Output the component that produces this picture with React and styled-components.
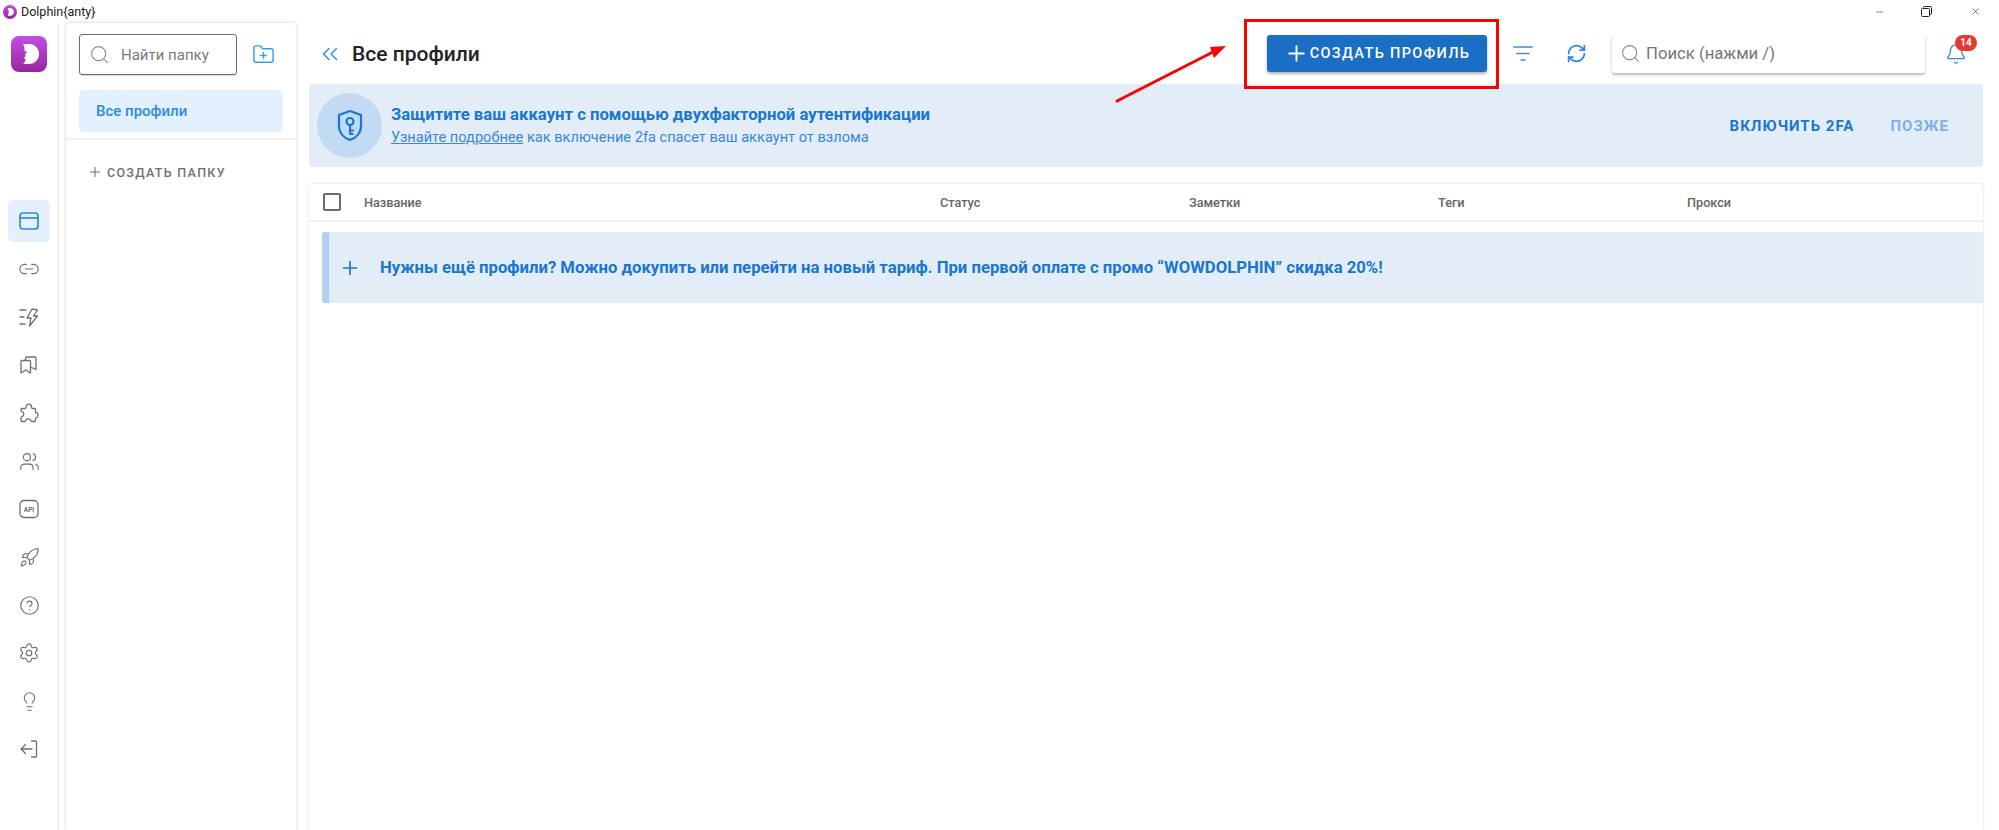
import React from 'react';
import styled, { createGlobalStyle } from 'styled-components';
import {
  Link2,
  Users,
  Rocket,
  CircleHelp,
  Settings,
  Lightbulb,
  Search,
  FolderPlus,
  ChevronsLeft,
  Plus,
  RefreshCw,
  Bell,
  Minus,
  X,
} from 'lucide-react';

const GlobalStyle = createGlobalStyle`
  html, body {
    margin: 0;
    padding: 0;
    background: #fff;
    font-family: Roboto, "Liberation Sans", sans-serif;
  }
  * { box-sizing: border-box; }
`;

const BLUE = '#1976d2';
const LIGHT = '#e3edf8';

const LogoMark = ({ size = 36, radius = 8 }) => (
  <svg width={size} height={size} viewBox="0 0 36 36">
    <defs>
      <linearGradient id={`lg${size}`} x1="0" y1="0" x2="0" y2="1">
        <stop offset="0" stopColor="#c04fe6" />
        <stop offset="1" stopColor="#98269f" />
      </linearGradient>
    </defs>
    <rect width="36" height="36" rx={radius} fill={`url(#lg${size})`} />
    <path
      d="M12 8h6c6 0 10 4.500 10 10s-4 10-10 10h-6c1.500-1.500 2.400-3 2.600-4.500l-1.600-1.500 1.400-1.500v-3l2-1-3-2c.5-2.500-.2-4.500-1.400-6.500z"
      fill="#fff"
    />
  </svg>
);

const BrowserIcon = () => (
  <svg width="20" height="18" viewBox="0 0 20 18" fill="none" stroke="currentColor" strokeWidth="1.700">
    <rect x="1" y="1" width="18" height="16" rx="3" />
    <path d="M1 6h18" />
  </svg>
);

const BoltList = () => (
  <svg width="21" height="21" viewBox="0 0 21 21" fill="none" stroke="currentColor" strokeWidth="1.300" strokeLinejoin="round" strokeLinecap="round">
    <path d="M1 3h6M1 10h4M1 17h5" />
    <path d="M13 2l-5 9h4l-1.500 8 8-10h-4l4-6z" />
  </svg>
);

const Bookmarks = () => (
  <svg width="20" height="20" viewBox="0 0 20 20" fill="none" stroke="currentColor" strokeWidth="1.300" strokeLinejoin="round">
    <path d="M2 6.500a1 1 0 0 1 1-1h7.500a1 1 0 0 1 1 1V18l-4.700-3L2 18z" />
    <path d="M6.500 5.500V3a1 1 0 0 1 1-1H16a1 1 0 0 1 1 1v11.500l-5.500-2.500" />
  </svg>
);

const PuzzleBlob = () => (
  <svg width="20" height="20" viewBox="0 0 20 20" fill="none" stroke="currentColor" strokeWidth="1.300" strokeLinejoin="round">
    <path d="M7 4.200c0-4 5.500-4 5.500 0 0 .8.500 1.300 1.300 1.300h1.700a1 1 0 0 1 1 1v2c0 .8.500 1.200 1 1.200 2 .4 2 4.600 0 5-.5 0-1 .4-1 1.200v1.600a1 1 0 0 1-1 1h-2.500c-.7 0-1-.4-1.200-1-.6-2.200-4.400-2.200-5 0-.2.6-.5 1-1.200 1H3a1 1 0 0 1-1-1v-2.800c0-.6.400-1 1-1.200 2.400-.6 2.400-4.200 0-4.800-.6-.2-1-.6-1-1.200V6.500a1 1 0 0 1 1-1h2.700c.8 0 1.300-.5 1.300-1.300z" />
  </svg>
);

const ApiBadge = () => (
  <svg width="20" height="20" viewBox="0 0 20 20" fill="none" stroke="currentColor" strokeWidth="1.300">
    <rect x="1" y="1.500" width="18" height="17" rx="4" />
    <text x="10" y="12.500" textAnchor="middle" fontSize="6.500" fontWeight="700" fontFamily="Roboto" fill="currentColor" stroke="none">API</text>
  </svg>
);

const ExitLeft = () => (
  <svg width="20" height="20" viewBox="0 0 20 20" fill="none" stroke="currentColor" strokeWidth="1.300" strokeLinecap="round" strokeLinejoin="round">
    <path d="M12.500 2h4a1 1 0 0 1 1 1v14a1 1 0 0 1-1 1h-4" />
    <path d="M13 10H2M6.500 5.500 2 10l4.500 4.500" />
  </svg>
);

const FilterLines = () => (
  <svg width="20" height="15" viewBox="0 0 20 15" fill="none" stroke="#3a8fe0" strokeWidth="1.500" strokeLinecap="round">
    <path d="M.8 1h18.400M4 7.500h12M8 14h4" />
  </svg>
);

const ShieldKey = () => (
  <svg width="26" height="33" viewBox="0 0 26 33" fill="none" stroke={BLUE} strokeWidth="2.200" strokeLinejoin="round" strokeLinecap="round">
    <path d="M13 2 24 6v11c0 7-5 12-11 14C7 29 2 24 2 17V6z" />
    <circle cx="13" cy="12.500" r="3.500" />
    <path d="M13 16v9M13 21.500h3M13 25h2.500" />
  </svg>
);

const RestoreIcon = () => (
  <svg width="11" height="11" viewBox="0 0 11 11" fill="none" stroke="#222" strokeWidth="1">
    <rect x=".5" y="2.500" width="8" height="8" rx="1" />
    <path d="M2.500 2.500V1.500a1 1 0 0 1 1-1h6a1 1 0 0 1 1 1v6a1 1 0 0 1-1 1h-1" />
  </svg>
);

const Page = styled.div`
  position: relative;
  width: 1999px;
  height: 830px;
  overflow: hidden;
  display: flex;
  flex-direction: column;
`;

const TitleBar = styled.header`
  height: 23px;
  flex: none;
  display: flex;
  align-items: center;
  padding: 0 18px 0 3px;
  font-size: 12.500px;
  color: #222;
`;

const AppName = styled.span`
  margin-left: 4px;
  flex: 1;
`;

const WinButton = styled.span`
  width: 11px;
  height: 11px;
  display: flex;
  align-items: center;
  justify-content: center;
  color: #222;
  margin-left: ${(p) => p.$gap}px;
`;

const Body = styled.div`
  flex: 1;
  display: flex;
  min-height: 0;
`;

const Rail = styled.nav`
  width: 59px;
  flex: none;
  border-right: 2px solid #efefef;
  display: flex;
  flex-direction: column;
  align-items: center;
  padding: 13px 0 0 1px;
`;

const Nav = styled.div`
  margin-top: 128px;
  display: flex;
  flex-direction: column;
  gap: 6px;
`;

const NavItem = styled.div`
  width: 42px;
  height: 42px;
  border-radius: 5px;
  display: flex;
  align-items: center;
  justify-content: center;
  background: ${(p) => (p.$active ? '#e3f0fd' : 'transparent')};
  color: ${(p) => (p.$active ? '#2f8ae6' : '#6f6f6f')};
`;

const Folders = styled.aside`
  width: 230px;
  flex: none;
  margin-left: 7px;
  border-radius: 4px 4px 0 0;
  box-shadow: 0 0 4px rgba(0, 0, 0, 0.18);
  background: #fff;
`;

const FolderTop = styled.div`
  padding: 11px 13px 6px;
  border-bottom: 2px solid #f1f1f1;
`;

const FolderSearchRow = styled.div`
  display: flex;
  align-items: center;
  gap: 15px;
  margin-bottom: 15px;
`;

const FolderSearch = styled.div`
  width: 158px;
  height: 41px;
  border: 1px solid #6c6c6c;
  border-radius: 3px;
  display: flex;
  align-items: center;
  padding-left: 9px;
  gap: 11px;
  font-size: 15px;
  color: #7a7a7a;
  box-shadow: 0 1px 1px rgba(0, 0, 0, 0.15);
`;

const FolderItem = styled.div`
  height: 42px;
  border-radius: 5px;
  background: #e3f0fd;
  color: #2b8be6;
  font-size: 15px;
  font-weight: 500;
  display: flex;
  align-items: center;
  padding-left: 17px;
`;

const CreateFolder = styled.div`
  display: flex;
  align-items: center;
  gap: 4px;
  padding: 24px 0 0 21px;
  font-size: 12.500px;
  font-weight: 500;
  letter-spacing: 1.300px;
  color: #6f6f6f;
`;

const Main = styled.main`
  flex: 1;
  min-width: 0;
  padding: 0 16px 0 13px;
  display: flex;
  flex-direction: column;
`;

const TopBar = styled.div`
  height: 61px;
  flex: none;
  display: flex;
  align-items: center;
  padding: 0 16px 0 8px;
`;

const PageTitle = styled.h1`
  margin: 0 0 0 9px;
  font-size: 21px;
  font-weight: 500;
  color: #222;
  flex: 1;
`;

const CreateButton = styled.button`
  width: 220px;
  height: 37px;
  border: 0;
  border-radius: 3px;
  background: #1a6fc4;
  color: #fff;
  font: 500 14.500px Roboto, sans-serif;
  letter-spacing: 1.350px;
  display: flex;
  align-items: center;
  justify-content: center;
  gap: 1px;
  box-shadow: 0 2px 3px rgba(0, 0, 0, 0.3);
`;

const ToolIcon = styled.span`
  display: flex;
  color: #2f86dc;
  margin-left: ${(p) => p.$gap}px;
`;

const SearchBox = styled.div`
  width: 313px;
  height: 39px;
  margin-left: 25px;
  border-radius: 3px;
  display: flex;
  align-items: center;
  gap: 5px;
  padding-left: 8px;
  font-size: 16.700px;
  color: #767676;
  box-shadow: 0 2px 3px rgba(0, 0, 0, 0.28);
`;

const BellWrap = styled.div`
  position: relative;
  display: flex;
  margin-left: 20px;
  color: #2f8ae6;
`;

const Badge = styled.span`
  position: absolute;
  top: -8px;
  left: 10px;
  width: 22px;
  height: 16px;
  border-radius: 8px;
  background: #e53935;
  color: #fff;
  font-size: 10px;
  font-weight: 700;
  display: flex;
  align-items: center;
  justify-content: center;
`;

const Banner = styled.section`
  height: 83px;
  flex: none;
  border-radius: 4px;
  background: ${LIGHT};
  display: flex;
  align-items: center;
  padding: 0 34px 0 8px;
`;

const ShieldCircle = styled.div`
  width: 65px;
  height: 65px;
  flex: none;
  border-radius: 50%;
  background: #c2daf3;
  display: flex;
  align-items: center;
  justify-content: center;
`;

const BannerText = styled.div`
  flex: 1;
  margin-left: 9px;
  color: ${BLUE};
`;

const BannerTitle = styled.div`
  font-size: 16.700px;
  font-weight: 700;
  margin-bottom: 4px;
`;

const BannerSub = styled.div`
  font-size: 14.600px;
  color: #3b87d6;

  a {
    color: inherit;
    text-decoration: underline;
  }
`;

const BannerAction = styled.span`
  font-size: 15px;
  font-weight: 700;
  letter-spacing: 1px;
  color: ${(p) => (p.$muted ? '#7fb0e6' : BLUE)};
  margin-left: ${(p) => p.$gap}px;
`;

const TableCard = styled.section`
  flex: 1;
  margin-top: 17px;
  background: #fff;
  box-shadow: 0 0 3px rgba(0, 0, 0, 0.16);
  border-radius: 4px 4px 0 0;
`;

const HeadRow = styled.div`
  height: 38px;
  border-bottom: 2px solid #f0f0f0;
  display: grid;
  grid-template-columns: 41px 576px 249px 249px 249px 1fr;
  align-items: center;
  padding-left: 14px;
  font-size: 12.700px;
  font-weight: 500;
  color: #666;
`;

const Check = styled.span`
  width: 18px;
  height: 18px;
  border: 2px solid #6c6c6c;
  border-radius: 2px;
`;

const UpsellRow = styled.div`
  height: 71px;
  margin: 10px 0 0 13px;
  background: ${LIGHT};
  border-left: 7px solid #aed0f2;
  border-radius: 3px 0 0 3px;
  display: flex;
  align-items: center;
  gap: 19px;
  padding-left: 10px;
  font-size: 16.700px;
  font-weight: 700;
  color: ${BLUE};
`;

const RedBox = styled.div`
  position: absolute;
  left: 1244px;
  top: 19px;
  width: 255px;
  height: 70px;
  border: 3px solid #f00;
  pointer-events: none;
`;

const ArrowLayer = styled.svg`
  position: absolute;
  left: 1110px;
  top: 40px;
  pointer-events: none;
`;

const navIcons = [
  <BrowserIcon />,
  <Link2 size={22} strokeWidth={1.300} />,
  <BoltList />,
  <Bookmarks />,
  <PuzzleBlob />,
  <Users size={21} strokeWidth={1.300} />,
  <ApiBadge />,
  <Rocket size={21} strokeWidth={1.300} />,
  <CircleHelp size={21} strokeWidth={1.300} />,
  <Settings size={22} strokeWidth={1.300} />,
  <Lightbulb size={21} strokeWidth={1.300} />,
  <ExitLeft />,
];

const columns = ['Название', 'Статус', 'Заметки', 'Теги', 'Прокси'];

export default function App() {
  return (
    <Page>
      <GlobalStyle />
      <TitleBar>
        <LogoMark size={14} radius={18} />
        <AppName>Dolphin{'{anty}'}</AppName>
        <WinButton><Minus size={14} strokeWidth={1.200} /></WinButton>
        <WinButton $gap={36}><RestoreIcon /></WinButton>
        <WinButton $gap={38}><X size={15} strokeWidth={1.200} /></WinButton>
      </TitleBar>
      <Body>
        <Rail>
          <LogoMark />
          <Nav>
            {navIcons.map((icon, i) => (
              <NavItem key={i} $active={i === 0}>{icon}</NavItem>
            ))}
          </Nav>
        </Rail>
        <Folders>
          <FolderTop>
            <FolderSearchRow>
              <FolderSearch>
                <Search size={21} strokeWidth={1.200} color="#8a8a8a" />
                Найти папку
              </FolderSearch>
              <FolderPlus size={23} strokeWidth={1.500} color="#3a9be8" />
            </FolderSearchRow>
            <FolderItem>Все профили</FolderItem>
          </FolderTop>
          <CreateFolder>
            <Plus size={16} strokeWidth={1.500} />
            СОЗДАТЬ ПАПКУ
          </CreateFolder>
        </Folders>
        <Main>
          <TopBar>
            <ChevronsLeft size={26} strokeWidth={1.300} color="#2f8ae6" />
            <PageTitle>Все профили</PageTitle>
            <CreateButton>
              <Plus size={25} strokeWidth={1.800} />
              СОЗДАТЬ ПРОФИЛЬ
            </CreateButton>
            <ToolIcon $gap={26}><FilterLines /></ToolIcon>
            <ToolIcon $gap={33}><RefreshCw size={21} strokeWidth={2} /></ToolIcon>
            <SearchBox>
              <Search size={21} strokeWidth={1.200} color="#8a8a8a" />
              Поиск (нажми /)
            </SearchBox>
            <BellWrap>
              <Bell size={22} strokeWidth={1.500} />
              <Badge>14</Badge>
            </BellWrap>
          </TopBar>
          <Banner>
            <ShieldCircle><ShieldKey /></ShieldCircle>
            <BannerText>
              <BannerTitle>Защитите ваш аккаунт с помощью двухфакторной аутентификации</BannerTitle>
              <BannerSub>
                <a href="#2fa">Узнайте подробнее</a> как включение 2fa спасет ваш аккаунт от взлома
              </BannerSub>
            </BannerText>
            <BannerAction>ВКЛЮЧИТЬ 2FA</BannerAction>
            <BannerAction $muted $gap={36}>ПОЗЖЕ</BannerAction>
          </Banner>
          <TableCard>
            <HeadRow>
              <Check />
              {columns.map((c) => (
                <span key={c}>{c}</span>
              ))}
            </HeadRow>
            <UpsellRow>
              <Plus size={22} strokeWidth={1.800} />
              Нужны ещё профили? Можно докупить или перейти на новый тариф. При первой оплате с промо “WOWDOLPHIN” скидка 20%!
            </UpsellRow>
          </TableCard>
        </Main>
      </Body>
      <RedBox />
      <ArrowLayer width="125" height="70" viewBox="0 0 125 70">
        <path d="M7 61 103 12" stroke="#f00" strokeWidth="3" strokeLinecap="round" />
        <path d="M116 6 100 7l4 11z" fill="#f00" />
      </ArrowLayer>
    </Page>
  );
}
